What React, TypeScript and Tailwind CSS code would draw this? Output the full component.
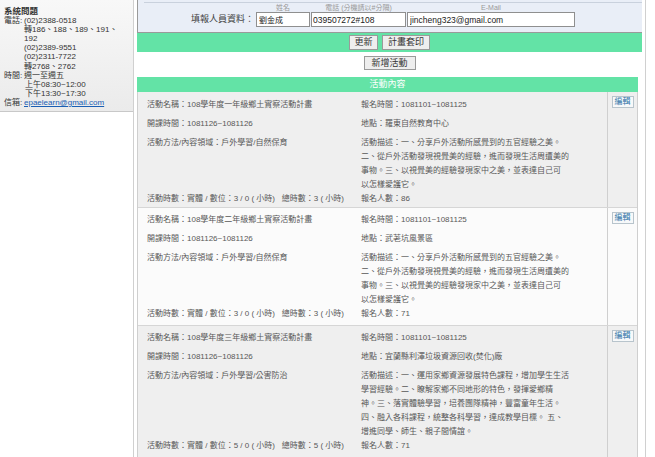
import React from 'react';

type Activity = {
  name: string;
  time: string;
  method: string;
  hours: string;
  total: string;
  signup: string;
  place: string;
  desc: string[];
  count: string;
};

const activities: Activity[] = [
  {
    name: '108學年度一年級鄉土實察活動計畫',
    time: '1081126~1081126',
    method: '戶外學習/自然保育',
    hours: '3 / 0',
    total: '3',
    signup: '1081101~1081125',
    place: '羅東自然教育中心',
    desc: [
      '一、分享戶外活動所感覺到的五官經驗之美。',
      '二、從戶外活動發現視覺美的經驗，進而發現生活周遭美的',
      '事物。三、以視覺美的經驗發現家中之美，並表達自己可',
      '以怎樣愛護它。',
    ],
    count: '86',
  },
  {
    name: '108學年度二年級鄉土實察活動計畫',
    time: '1081126~1081126',
    method: '戶外學習/自然保育',
    hours: '3 / 0',
    total: '3',
    signup: '1081101~1081125',
    place: '武荖坑風景區',
    desc: [
      '一、分享戶外活動所感覺到的五官經驗之美。',
      '二、從戶外活動發現視覺美的經驗，進而發現生活周遭美的',
      '事物。三、以視覺美的經驗發現家中之美，並表達自己可',
      '以怎樣愛護它。',
    ],
    count: '71',
  },
  {
    name: '108學年度三年級鄉土實察活動計畫',
    time: '1081126~1081126',
    method: '戶外學習/公害防治',
    hours: '5 / 0',
    total: '5',
    signup: '1081101~1081125',
    place: '宜蘭縣利澤垃圾資源回收(焚化)廠',
    desc: [
      '一、運用家鄉資源發展特色課程，增加學生生活',
      '學習經驗。二、瞭解家鄉不同地形的特色，發揮愛鄉精',
      '神。三、落實體驗學習，培養團隊精神，豐富童年生活。',
      '四、融入各科課程，統整各科學習，達成教學目標。 五、',
      '增進同學、師生、親子間情誼。',
    ],
    count: '71',
  },
];

function EditButton() {
  return (
    <button className="mx-auto mt-[4px] block h-[12px] w-[22px] border border-[#b8c4cc] bg-[#f7f9fa] text-[8px] leading-[10px] text-[#2f74a8]">
      編輯
    </button>
  );
}

function ActivityRow({ a, shade, first }: { a: Activity; shade: boolean; first: boolean }) {
  return (
    <div className={`flex border-b border-[#d6d6d6] ${shade ? 'bg-[#efefef]' : 'bg-[#fbfbfb]'}`}>
      <div
        className={`grid w-[469px] grid-cols-[214px_1fr] pl-[9px] text-[8px] leading-[14px] text-[#585858] ${
          first ? 'pt-[6px] pb-[1px]' : 'pt-[5px] pb-[4px]'
        }`}
      >
        <div className="h-[19px]">活動名稱：{a.name}</div>
        <div className="h-[19px]">報名時間：{a.signup}</div>
        <div className="h-[19px]">開課時間：{a.time}</div>
        <div className="h-[19px]">地點：{a.place}</div>
        <div>活動方法/內容領域：{a.method}</div>
        <div className="whitespace-nowrap">
          {a.desc.map((line, i) => (
            <div key={i}>{i === 0 ? `活動描述：${line}` : line}</div>
          ))}
        </div>
        <div className="whitespace-pre">
          活動時數：實體 / 數位：{a.hours} ( 小時){'   '}總時數：{a.total} ( 小時)
        </div>
        <div>報名人數：{a.count}</div>
      </div>
      <div className="flex-1 border-l border-[#cfcfcf]">
        <EditButton />
      </div>
    </div>
  );
}

export default function App() {
  return (
    <div className="flex h-screen overflow-hidden bg-white font-['Liberation_Sans','Noto_Sans_CJK_TC',sans-serif]">
      <aside className="w-[133px] shrink-0">
        <div className="border-b border-[#c8c8c8] bg-gradient-to-b from-[#f8f8f8] to-[#ebebeb] pl-[4px] pt-[7px] pb-[4px] text-[8px] leading-[9.1px] text-[#333]">
          <div className="text-[8.5px] font-bold">系統問題</div>
          <div className="grid grid-cols-[20px_1fr]">
            <div>電話:</div>
            <div>
              (02)2388-0518
              <br />
              轉186、188、189、191、
              <br />
              192
              <br />
              (02)2389-9551
              <br />
              (02)2311-7722
              <br />
              轉2768、2762
            </div>
            <div>時間:</div>
            <div>
              週一至週五
              <br />
              <span className="pl-[1px]">上午08:30~12:00</span>
              <br />
              <span className="pl-[1px]">下午13:30~17:30</span>
            </div>
            <div>信箱:</div>
            <div>
              <a href="#" className="text-[#1a5fb4] underline">
                epaelearn@gmail.com
              </a>
            </div>
          </div>
        </div>
      </aside>

      <main className="w-[513px] shrink-0 border-x border-[#d0d0d0] pl-[3px]">
        <div className="w-[505px] border-b border-l border-[#9a9a9a] bg-[#e9eef7]">
          <div className="ml-[6px] h-[3px] border-b border-[#c9d1dd]" />
          <div className="flex items-end pb-[5px]">
            <div className="w-[118px] pr-[2px] text-right text-[9px] leading-[15px] text-[#444]">填報人員資料：</div>
            <div className="flex gap-[1px]">
              <div className="flex w-[54px] flex-col">
                <span className="text-center text-[7px] leading-[9px] text-[#999]">姓名</span>
                <input
                  defaultValue="劉金成"
                  className="h-[15px] w-full border border-[#8f8f8f] bg-white px-[2px] text-[8px] text-[#222] outline-none"
                />
              </div>
              <div className="flex w-[95px] flex-col">
                <span className="whitespace-nowrap text-center text-[7px] leading-[9px] text-[#999]">電話 (分機請以#分隔)</span>
                <input
                  defaultValue="039507272#108"
                  className="h-[15px] w-full border border-[#8f8f8f] bg-white px-[1px] text-[8.5px] text-[#222] outline-none"
                />
              </div>
              <div className="flex w-[168px] flex-col">
                <span className="text-center text-[7px] leading-[9px] text-[#999]">E-Mail</span>
                <input
                  defaultValue="jincheng323@gmail.com"
                  className="h-[15px] w-full border border-[#8f8f8f] bg-white px-[2px] text-[8.5px] text-[#222] outline-none"
                />
              </div>
            </div>
          </div>
        </div>

        <div className="flex h-[19px] w-[505px] items-center justify-center gap-[4px] bg-[#63e3a6]">
          <button className="h-[15px] w-[29px] border border-[#9a9a9a] bg-[#eeeeee] text-[9px] leading-[13px] text-[#333]">更新</button>
          <button className="h-[15px] w-[48px] border border-[#9a9a9a] bg-[#eeeeee] text-[9px] leading-[13px] text-[#333]">計畫套印</button>
        </div>

        <div className="flex w-[505px] justify-center pt-[4px] pb-[7px]">
          <button className="h-[14px] w-[52px] border border-[#9a9a9a] bg-[#eeeeee] text-[9px] leading-[12px] text-[#333]">新增活動</button>
        </div>

        <div className="w-[501px]">
          <div className="h-[15px] bg-[#63e3a6] text-center text-[9px] leading-[15px] text-white">活動內容</div>
          <div className="border-x border-[#cfcfcf]">
            {activities.map((a, i) => (
              <ActivityRow key={i} a={a} shade={i % 2 === 0} first={i === 0} />
            ))}
            <div className="flex h-[40px] bg-[#fbfbfb]">
              <div className="w-[469px]" />
              <div className="flex-1 border-l border-[#cfcfcf]">
                <div className="mx-auto mt-[4px] h-[12px] w-[22px] border border-[#b8c4cc] bg-[#f7f9fa]" />
              </div>
            </div>
          </div>
        </div>
      </main>
    </div>
  );
}
